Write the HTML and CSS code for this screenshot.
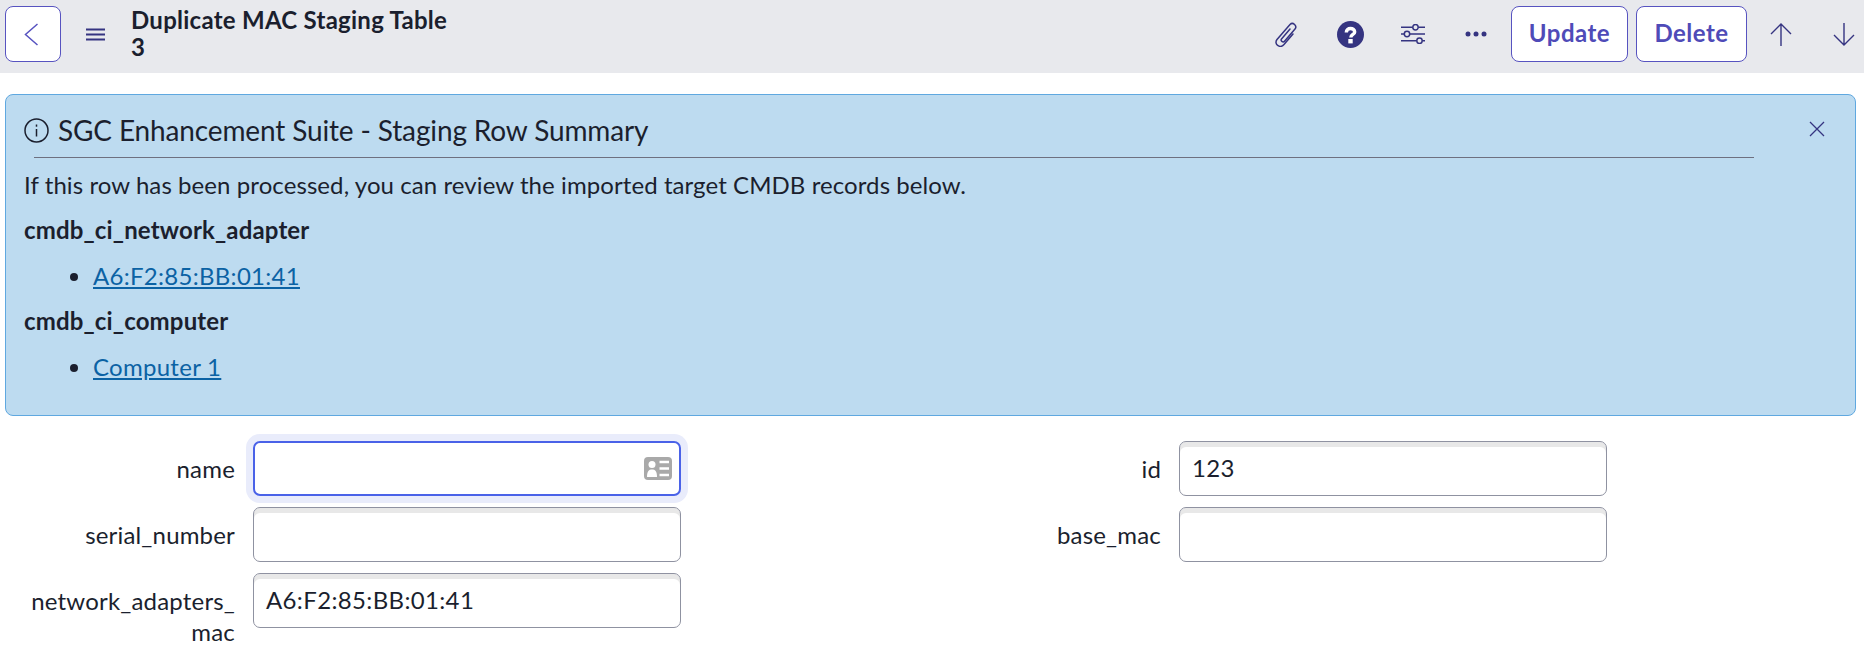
FILE: index.html
```html
<!DOCTYPE html>
<html lang="en">
<head>
  <meta charset="UTF-8">
  <title>Duplicate MAC Staging Table 3</title>
  <link rel="stylesheet" href="styles.css">
</head>
<body>
  <header class="form-header">
    <button class="btn btn-back" aria-label="Back">
      <svg width="15" height="23" viewBox="0 0 15 23" fill="none" stroke="#5753c0" stroke-width="1.5"><path d="M13.5 1 1.5 11.5 13.5 22"/></svg>
    </button>
    <svg class="menu-icon" width="19" height="13" viewBox="0 0 19 13" fill="none" stroke="#353481" stroke-width="2"><path d="M0 1.5h19M0 6.5h19M0 11.5h19"/></svg>
    <h1 class="title">Duplicate MAC Staging Table<br>3</h1>
    <div class="actions">
      <span class="slot slot-clip">
        <svg width="24" height="26" viewBox="0 0 24 26" fill="none" stroke="#353481" stroke-width="1.5" stroke-linecap="round"><path d="M16 8 7.500 18c-1.500 1.800 1.500 4 3 2.200L21 8c2.500-3-2-7.500-5-4.500L3 18.500c-3.500 4.500 3 9.500 7 5L19 13"/></svg>
      </span>
      <span class="slot">
        <svg width="27" height="27" viewBox="0 0 27 27"><circle cx="13.500" cy="13.500" r="13.500" fill="#353481"/><path d="M9.300 11.500c0-2.600 1.900-4 4.200-4s4.200 1.300 4.200 3.400c0 2.600-3.900 2.500-3.900 5.600" fill="none" stroke="#fff" stroke-width="3.400"/><rect x="11.300" y="18" width="4.400" height="4.400" fill="#fff"/></svg>
      </span>
      <span class="slot">
        <svg width="24" height="20" viewBox="0 0 24 20" fill="none" stroke="#353481" stroke-width="1.500"><path d="M0 3.200h11.800M17.200 3.200H24M0 10h3.300M8.700 10H24M0 16.800h15.800M21.200 16.800H24"/><circle cx="14.500" cy="3.200" r="2.700"/><circle cx="6" cy="10" r="2.700"/><circle cx="18.500" cy="16.800" r="2.700"/></svg>
      </span>
      <span class="slot">
        <svg width="22" height="6" viewBox="0 0 22 6" fill="#353481"><circle cx="3" cy="3" r="2.500"/><circle cx="11" cy="3" r="2.500"/><circle cx="19" cy="3" r="2.500"/></svg>
      </span>
      <button class="btn btn-update">Update</button>
      <button class="btn btn-delete">Delete</button>
      <span class="slot slot-arrow">
        <svg width="22" height="23" viewBox="0 0 22 23" fill="none" stroke="#353481" stroke-width="1.400"><path d="M11 23V1M1 11 11 1l10 10"/></svg>
      </span>
      <span class="slot slot-arrow">
        <svg width="22" height="23" viewBox="0 0 22 23" fill="none" stroke="#353481" stroke-width="1.400"><path d="M11 0v22M1 12l10 10 10-10"/></svg>
      </span>
    </div>
  </header>

  <main class="content">
    <section class="alert">
      <svg class="alert-close" width="16" height="16" viewBox="0 0 16 16" fill="none" stroke="#353481" stroke-width="1.300"><path d="M1 1l14 14M15 1 1 15"/></svg>
      <div class="alert-head">
        <svg width="25" height="25" viewBox="0 0 25 25" fill="none" stroke="#1b1f2e" stroke-width="1.500"><circle cx="12.500" cy="12.500" r="11.500"/><path d="M12.500 11v7.500"/><path d="M12.500 6.500v2.200"/></svg>
        <span>SGC Enhancement Suite - Staging Row Summary</span>
      </div>
      <p>If this row has been processed, you can review the imported target CMDB records below.</p>
      <p class="table-name">cmdb_ci_network_adapter</p>
      <ul><li><a href="#">A6:F2:85:BB:01:41</a></li></ul>
      <p class="table-name">cmdb_ci_computer</p>
      <ul><li><a href="#">Computer 1</a></li></ul>
    </section>

    <form class="fields">
      <div class="field">
        <label>name</label>
        <div class="input input-focus">
          <svg width="28" height="23" viewBox="0 0 28 23"><rect width="28" height="23" rx="4" fill="#a9a9a9"/><circle cx="8" cy="7.500" r="3.500" fill="#fff"/><path d="M3 20c0-6 2-7.500 5-7.500s5 1.500 5 7.500z" fill="#fff"/><path d="M15.500 5H25M15.500 11.500H25M15.500 18H25" stroke="#fff" stroke-width="2.500"/></svg>
        </div>
      </div>
      <div class="field">
        <label>id</label>
        <div class="input">123</div>
      </div>
      <div class="field">
        <label>serial_number</label>
        <div class="input"></div>
      </div>
      <div class="field">
        <label>base_mac</label>
        <div class="input"></div>
      </div>
      <div class="field">
        <label>network_adapters_<br>mac</label>
        <div class="input">A6:F2:85:BB:01:41</div>
      </div>
    </form>
  </main>
</body>
</html>
```

FILE: styles.css
```css
* { box-sizing: border-box; }
html, body { height: 100%; }
body {
  margin: 0;
  background: #fff;
  color: #1b1f2e;
  font-family: Lato, sans-serif;
  font-size: 24px;
  overflow: hidden;
}

.form-header {
  height: 73px;
  background: #e8e9ed;
  display: flex;
  align-items: center;
  padding: 0 0 5px 5px;
}
.btn {
  height: 56px;
  background: #fff;
  border: 1px solid #5753c0;
  border-radius: 8px;
  color: #4f4bb8;
  font-family: inherit;
  font-size: 24px;
  font-weight: 700;
  letter-spacing: 0.5px;
  padding: 0 0 3px;
}
.btn-back {
  width: 56px;
  display: flex;
  align-items: center;
  justify-content: center;
  padding: 0 4px 0 0;
}
.btn-update { width: 117px; }
.btn-delete { width: 111px; margin-left: 8px; }
.menu-icon { margin-left: 25px; }
.title {
  margin: 0 0 3px 26px;
  font-size: 24px;
  font-weight: 700;
  letter-spacing: 0.26px;
  line-height: 27px;
}
.actions {
  margin-left: auto;
  display: flex;
  align-items: center;
}
.slot {
  width: 56px;
  margin-right: 7px;
  display: flex;
  align-items: center;
  justify-content: center;
}
.slot-clip svg { margin-right: 2px; }
.slot-arrow { width: 40px; margin: 0 0 0 23px; }
.btn-delete + .slot-arrow { margin-left: 14px; }

.content { padding: 21px 8px 0 5px; }

.alert {
  position: relative;
  height: 322px;
  background: #bddbf0;
  border: 1px solid #5fa8e0;
  border-radius: 8px;
  padding: 20px 18px 0;
  letter-spacing: 0.08px;
}
.alert-close { position: absolute; top: 26px; right: 30px; }
.alert-head {
  display: flex;
  align-items: center;
  gap: 9px;
  margin-right: 83px;
  font-size: 28px;
  letter-spacing: -0.14px;
  line-height: 30px;
  padding-bottom: 13px;
  position: relative;
}
.alert-head::after {
  content: "";
  position: absolute;
  left: 10px;
  right: 0;
  bottom: 0;
  border-bottom: 1px solid #6e7080;
}
.alert p { margin: 12px 0 15px; line-height: 30px; }
.alert p + p { margin-top: 0; }
.alert .table-name { font-weight: 700; letter-spacing: 0.15px; }
.alert ul { margin: 0 0 15px; padding-left: 69px; line-height: 31px; }
.alert a { color: #0b62a4; letter-spacing: 0.28px; }

.fields {
  display: grid;
  grid-template-columns: 926px 1fr;
  row-gap: 11px;
  margin-top: 25px;
}
.field { display: flex; align-items: flex-start; }
.field label {
  width: 230px;
  margin-right: 18px;
  text-align: right;
  letter-spacing: 0.18px;
  line-height: 31px;
  padding-top: 12px;
}
.input {
  width: 428px;
  height: 55px;
  border: 1px solid #8f92a1;
  border-radius: 7px;
  box-shadow: inset 0 5px 0 #e8e8e8;
  background: #fff;
  padding: 0 12px 2px;
  letter-spacing: 0.35px;
  display: flex;
  align-items: center;
}
.input-focus {
  border: 2px solid #4a62e8;
  box-shadow: 0 0 0 7px #e9ecfb;
  justify-content: flex-end;
  padding: 0 7px 0 0;
}
```
